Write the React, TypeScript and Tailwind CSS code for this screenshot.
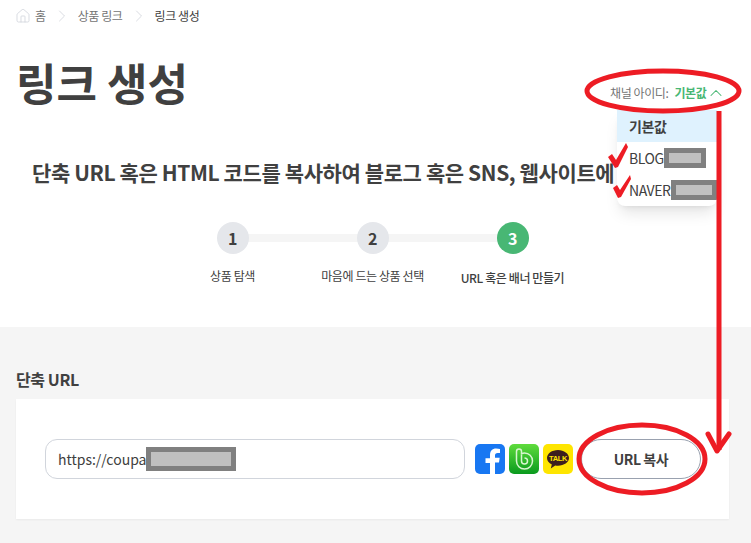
import { ChevronRight, ChevronUp, Home } from "lucide-react";

const steps = [
  { num: "1", label: "상품 탐색" },
  { num: "2", label: "마음에 드는 상품 선택" },
  { num: "3", label: "URL 혹은 배너 만들기", active: true },
];

function Redacted({ className }: { className: string }) {
  return <span className={"inline-block border-[5px] border-[#808080] bg-[#c0c0c0] " + className} />;
}

function Annotations() {
  return (
    <svg className="absolute left-0 top-0 pointer-events-none" width="751" height="543" viewBox="0 0 751 543" fill="none">
      <ellipse cx="663" cy="91" rx="76" ry="20" stroke="#ed1c24" strokeWidth="5" />
      <ellipse cx="642" cy="459" rx="63" ry="34" stroke="#ed1c24" strokeWidth="5" />
      <path d="M719 111V450" stroke="#ed1c24" strokeWidth="5" />
      <path d="M708 434L717 451L729 434" stroke="#ed1c24" strokeWidth="5" strokeLinecap="round" strokeLinejoin="round" />
      <path d="M608 157L612 154L616 160L626 143L628 147L618 167L615 168Z" fill="#ed1c24" />
      <path d="M613 188L617 185L620 190L630 175L631 179L621 197L618 198Z" fill="#ed1c24" />
    </svg>
  );
}

function Dropdown() {
  return (
    <div className="absolute left-[617px] top-[110px] w-[100px] overflow-hidden rounded-b-lg bg-white text-sm text-neutral-700 shadow-lg">
      <div className="flex h-8 items-center bg-sky-100 pl-3 font-bold">기본값</div>
      <div className="flex h-8 items-center pl-3">
        BLOG<Redacted className="h-5 w-10.5 shrink-0" />
      </div>
      <div className="flex h-8 items-center pl-3">
        NAVER<Redacted className="h-5 w-11.5 shrink-0" />
      </div>
    </div>
  );
}

function SocialIcons() {
  return (
    <div className="flex gap-1">
      <svg width="30" height="30" viewBox="0 0 30 30">
        <rect width="30" height="30" rx="5" fill="#1877f2" />
        <path d="M20 30V18.500h4l.7-4.700H20V11.500c0-1.500.7-2.500 2.700-2.500H25V5c-1-.2-2.400-.4-3.900-.4-3.800 0-6.100 2.300-6.100 6.300v3.400H10.500v4.700H15V30Z" fill="#fff" />
      </svg>
      <svg width="30" height="30" viewBox="0 0 30 30">
        <defs>
          <linearGradient id="band" x1="0" y1="0" x2="0" y2="1">
            <stop offset="0" stopColor="#5fdc3c" />
            <stop offset="1" stopColor="#0a9a1e" />
          </linearGradient>
        </defs>
        <rect width="30" height="30" rx="5" fill="url(#band)" />
        <path d="M7.500 17V7.500a2.500 2.500 0 0 1 5 0V10.500" stroke="#d8f5d0" strokeWidth="1.500" fill="none" />
        <path d="M7.500 17a8 8 0 1 0 8-8c-1.100 0-2.100.2-3 .6" stroke="#d8f5d0" strokeWidth="1.500" fill="none" />
        <path d="M12.500 10.500V17a3 3 0 1 0 3-3" stroke="#d8f5d0" strokeWidth="1.500" fill="none" />
      </svg>
      <svg width="30" height="30" viewBox="0 0 30 30">
        <rect width="30" height="30" rx="5" fill="#fee500" />
        <path d="M15 6c-6 0-11 3.600-11 8 0 2.800 1.900 5.200 4.800 6.600l-1 3.900 4.400-3c.9.100 1.800.2 2.800.2 6 0 11-3.500 11-7.700S21 6 15 6Z" fill="#3c1e1e" />
        <text x="15" y="16.500" textAnchor="middle" fontSize="7.500" fontWeight="700" fill="#fee500" fontFamily="'Liberation Sans', sans-serif">TALK</text>
      </svg>
    </div>
  );
}

export default function App() {
  return (
    <div className="relative h-[543px] w-[751px] overflow-hidden bg-neutral-100 tracking-tight text-neutral-700" style={{ fontFamily: "'Noto Sans CJK KR', 'Noto Sans', sans-serif" }}>
      <div className="h-[327px] overflow-hidden bg-white pl-4">
        {/* breadcrumb */}
        <div className="flex items-center gap-1 pt-1.5 text-xs text-neutral-500">
          <Home className="-ml-px h-4 w-4 text-gray-300" strokeWidth={1.25} />
          <span>홈</span>
          <ChevronRight className="mx-0.5 h-5 w-5 text-gray-300" strokeWidth={1} />
          <span>상품 링크</span>
          <ChevronRight className="mx-0.5 h-5 w-5 text-gray-300" strokeWidth={1} />
          <span className="text-neutral-700">링크 생성</span>
        </div>

        <h1 className="mt-8 pb-0.5 text-[44px] font-bold leading-12 tracking-normal">링크 생성</h1>

        <p className="mt-12 whitespace-nowrap pb-0.5 pl-4 text-[21px] font-bold leading-8">
          단축 URL 혹은 HTML 코드를 복사하여 블로그 혹은 SNS, 웹사이트에
        </p>

        {/* steps */}
        <div className="mt-8 flex justify-center pr-5.5">
          {steps.map((step, i) => (
            <div key={step.num} className="relative flex w-35 flex-col items-center">
              {i < 2 && <div className="absolute left-1/2 top-3 h-2 w-35 bg-neutral-100" />}
              <div className={"relative flex h-8 w-8 items-center justify-center rounded-full font-bold " + (step.active ? "bg-[#48b774] text-white" : "bg-gray-200")}>
                {step.num}
              </div>
              <div className={"whitespace-nowrap text-xs " + (step.active ? "mt-4 font-medium" : "mt-3.5")}>{step.label}</div>
            </div>
          ))}
        </div>
      </div>

      {/* channel id */}
      <div className="absolute left-[610px] top-[83px] flex items-center text-xs">
        <span className="text-neutral-500">채널 아이디:</span>
        <span className="ml-1.5 font-bold text-[#48b774]">기본값</span>
        <ChevronUp className="h-5 w-5 text-[#48b774]" strokeWidth={1.25} />
      </div>

      <Dropdown />

      <div className="px-4 pt-10">
        <h2 className="font-bold leading-6">단축 URL</h2>
        <div className="mt-2 flex h-30 w-[713px] items-center bg-white pl-7 shadow-xs">
          <div className="ml-px flex h-10 w-[420px] items-center rounded-xl border border-gray-300 pl-3 text-sm tracking-normal">
            https://coupa<Redacted className="h-6 w-22.5" />
          </div>
          <div className="ml-2.5">
            <SocialIcons />
          </div>
          <button className="ml-2 h-10 w-30 rounded-full border border-gray-400 text-sm font-bold">URL 복사</button>
        </div>
      </div>

      <Annotations />
    </div>
  );
}
